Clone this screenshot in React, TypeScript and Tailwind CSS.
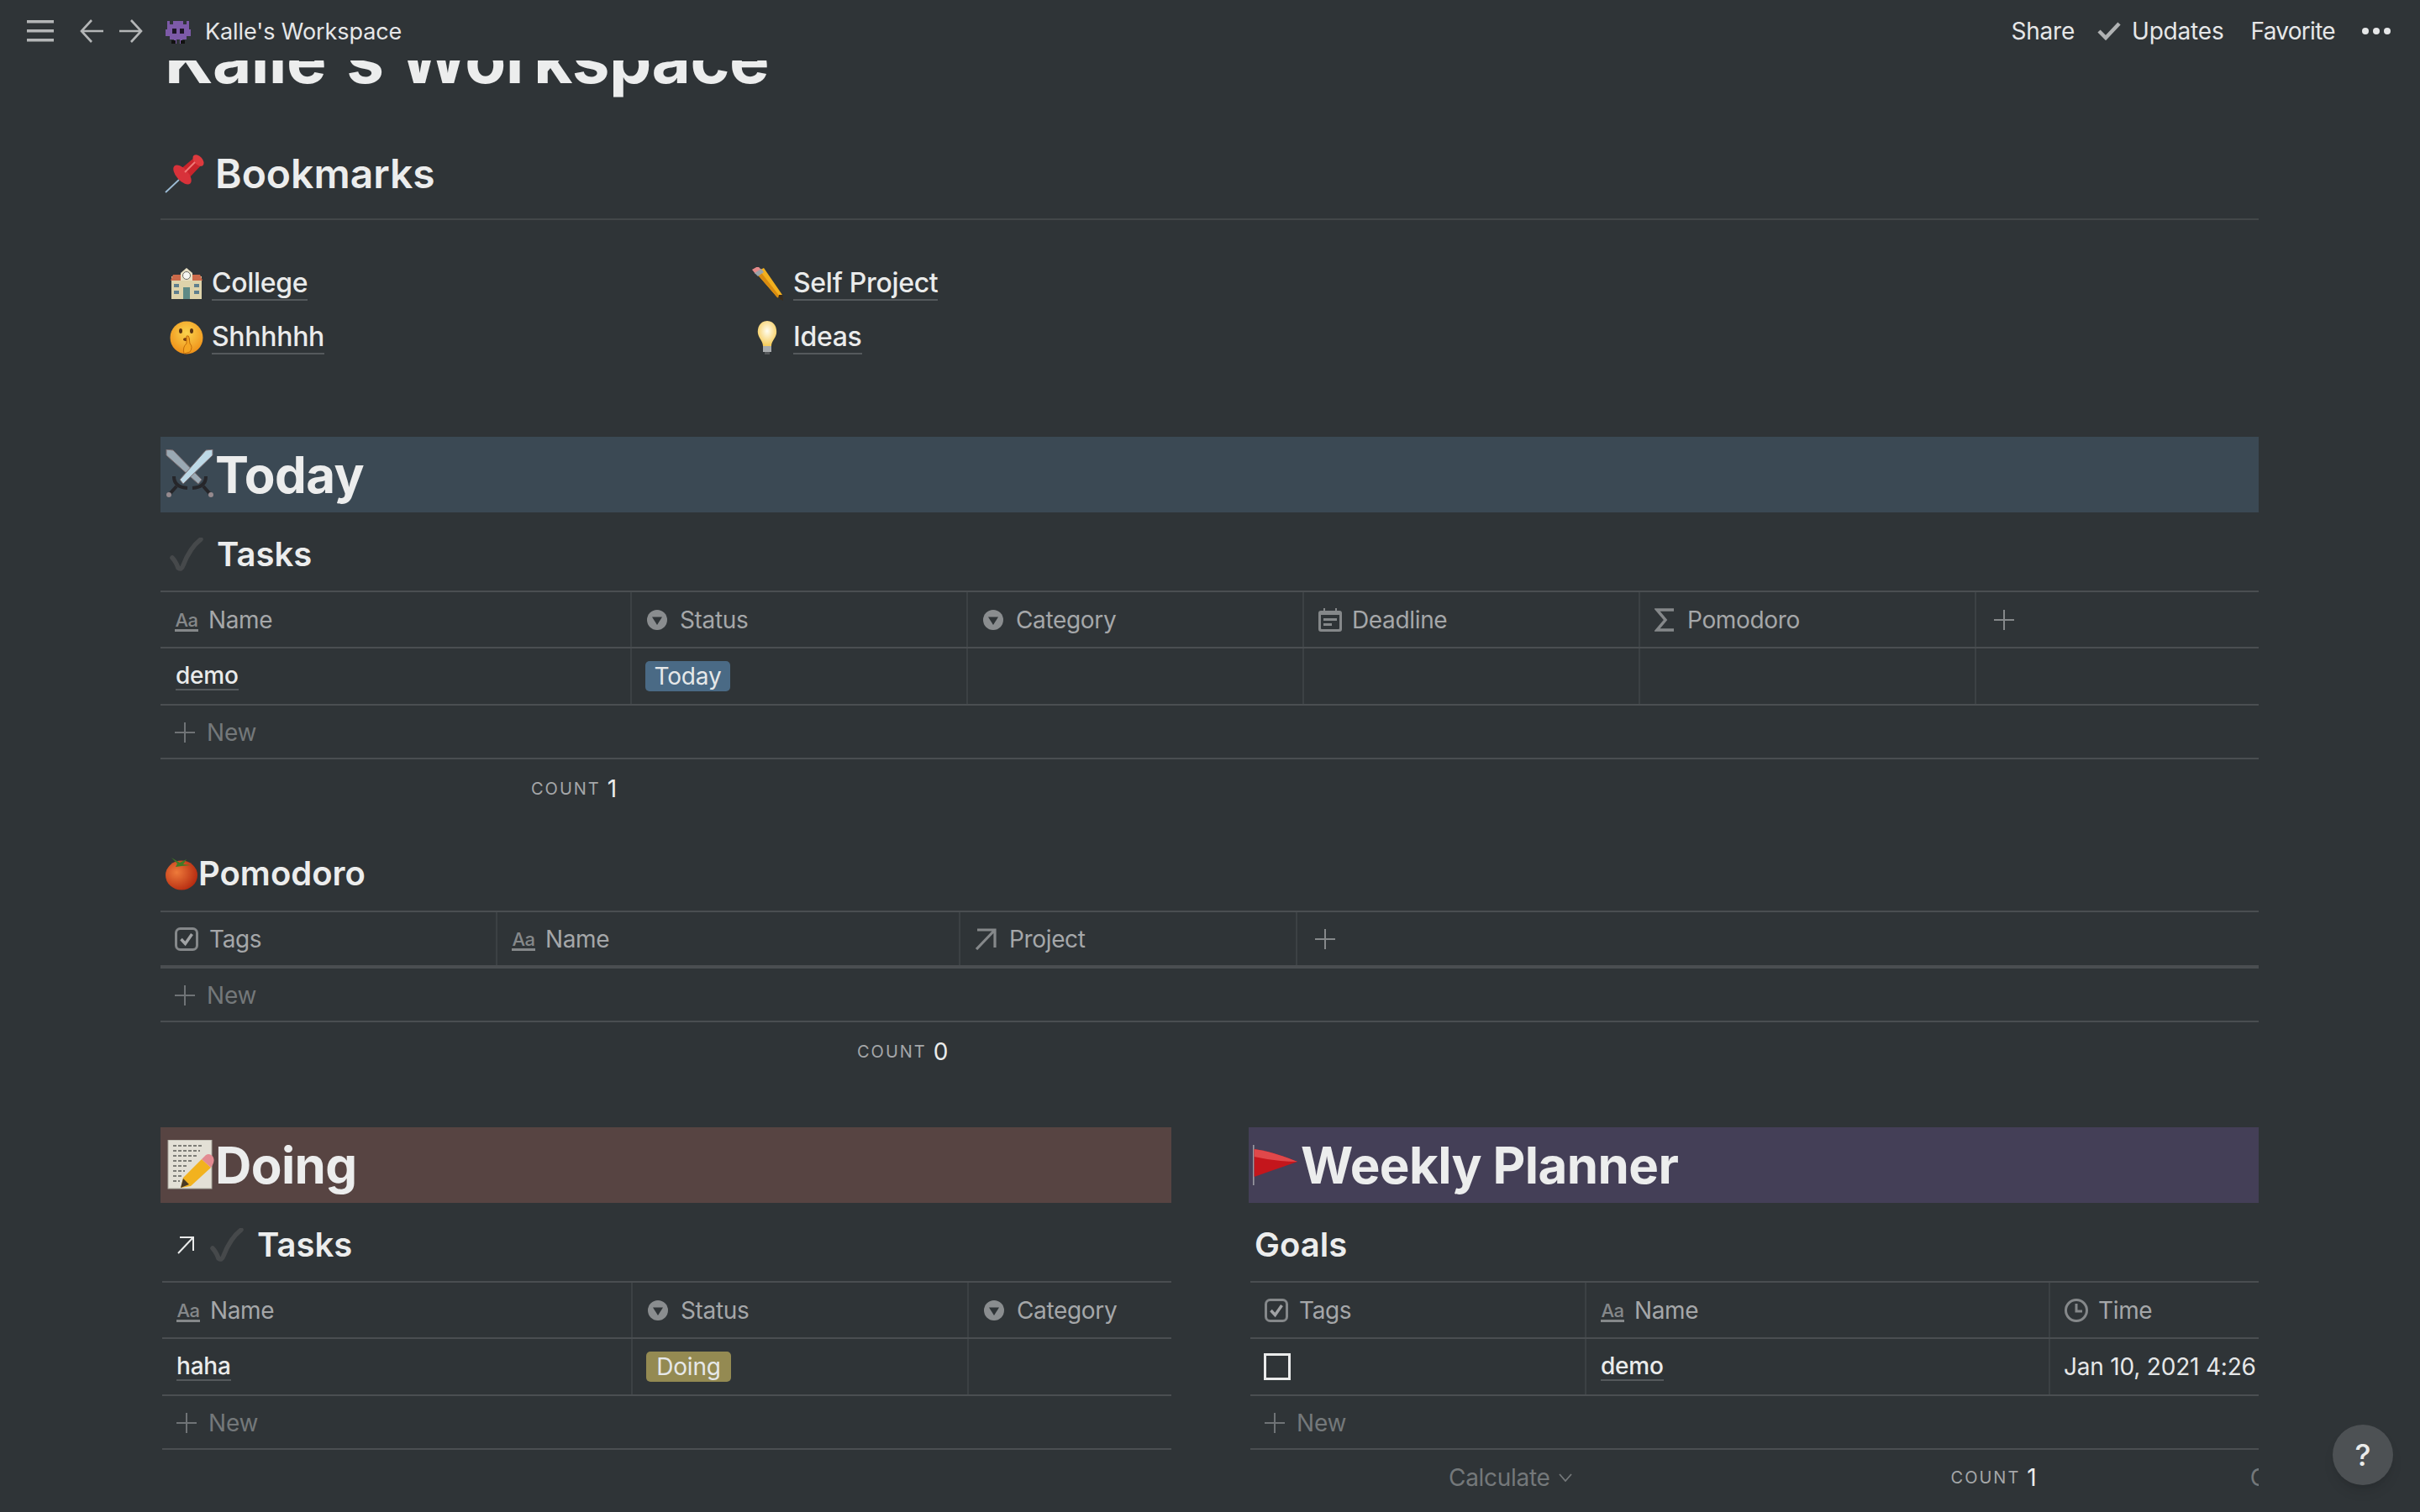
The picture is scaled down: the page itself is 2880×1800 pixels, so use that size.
import React from 'react';

const sans = 'font-["Inter","Noto_Sans",sans-serif]';

// ---- icons ----
const MenuIcon = () => (
  <svg width="32" height="26" viewBox="0 0 32 26" fill="#b4b6b7">
    <rect x="0" y="0" width="32" height="3.5" />
    <rect x="0" y="11" width="32" height="3.5" />
    <rect x="0" y="22" width="32" height="3.5" />
  </svg>
);

const ArrowIcon = ({ flip }: { flip?: boolean }) => (
  <svg width="28" height="28" viewBox="0 0 28 28" fill="none" stroke="#b4b6b7" strokeWidth="2.6" className={flip ? 'rotate-180' : ''}>
    <path d="M14 1 L2 14 L14 27 M2 14 H28" />
  </svg>
);

const CheckSmall = () => (
  <svg width="28" height="22" viewBox="0 0 28 22" fill="none" stroke="#b0b2b3" strokeWidth="4.5">
    <path d="M2 11 L10 19 L26 2" />
  </svg>
);

const Plus = ({ color = '#6f7376', size = 24 }: { color?: string; size?: number }) => (
  <svg width={size} height={size} viewBox="0 0 24 24" fill="none" stroke={color} strokeWidth="2">
    <path d="M12 0 V24 M0 12 H24" />
  </svg>
);

const TextIcon = () => (
  <span className="flex h-[28px] w-[28px] flex-col items-center justify-end">
    <span className="text-[22px] leading-[22px] font-medium tracking-[-0.5px] text-[#85888a]">Aa</span>
    <span className="h-[3px] w-[28px] bg-[#85888a]" />
  </span>
);

const SelectIcon = () => (
  <svg width="24" height="24" viewBox="0 0 24 24" className="mr-[3px] ml-px">
    <circle cx="12" cy="12" r="12" fill="#8a8d8f" />
    <path d="M6 8.5 H18 L12 18 Z" fill="#2f3437" />
  </svg>
);

const DateIcon = () => (
  <svg width="28" height="28" viewBox="0 0 28 28" fill="#85888a">
    <path d="M3 3 H6 V0 H8 V3 H20 V0 H22 V3 H25 A3 3 0 0 1 28 6 V25 A3 3 0 0 1 25 28 H3 A3 3 0 0 1 0 25 V6 A3 3 0 0 1 3 3 Z M3 8 V24 Q3 25 4 25 H24 Q25 25 25 24 V8 Z" />
    <rect x="6" y="12" width="16" height="3" />
    <rect x="6" y="18" width="10" height="3" />
  </svg>
);

const SigmaIcon = () => (
  <svg width="24" height="28" viewBox="0 0 24 28" fill="none" stroke="#85888a" strokeWidth="3.5" className="mr-[3px]">
    <path d="M23 2 H3 L13 14 L3 26 H23" />
  </svg>
);

const CheckboxIcon = () => (
  <svg width="28" height="28" viewBox="0 0 28 28" fill="none" stroke="#85888a" className="mr-px">
    <rect x="1.5" y="1.5" width="25" height="25" rx="5" strokeWidth="3" />
    <path d="M7.5 14 L12.5 19.5 L20.5 8" strokeWidth="3.5" stroke="#a0a2a4" />
  </svg>
);

const RelationIcon = () => (
  <svg width="26" height="26" viewBox="0 0 26 26" fill="none" stroke="#85888a" strokeWidth="3.2" className="mr-[3px]">
    <path d="M3 2 H24 V23 M24 2 L2 25" />
  </svg>
);

const ClockIcon = () => (
  <svg width="28" height="28" viewBox="0 0 28 28" fill="none" stroke="#85888a" strokeWidth="3">
    <circle cx="14" cy="14" r="12.5" />
    <path d="M14 6 V15 H21" />
  </svg>
);

const RelationSmall = () => (
  <svg width="22" height="22" viewBox="0 0 22 22" fill="none" stroke="#eaebeb" strokeWidth="2">
    <path d="M4 2 H20 V18 M20 2 L2 21" />
  </svg>
);

// ---- emoji drawings ----
const Invader = () => (
  <svg width="32" height="32" viewBox="0 0 32 32">
    <path d="M3 4 H6 V8 H10 V4 H22 V8 H26 V4 H29 V14 H31 V22 H26 V26 H21 V31 H18 V26 H14 V31 H11 V26 H6 V22 H1 V14 H3 Z" fill="#7d5aa8" />
    <rect x="9" y="13" width="5" height="6" fill="#1d1526" />
    <rect x="18" y="13" width="5" height="6" fill="#1d1526" />
    <rect x="8" y="27" width="5" height="4" fill="#111" />
    <rect x="19" y="27" width="5" height="4" fill="#111" />
  </svg>
);

const Pin = () => (
  <svg width="48" height="48" viewBox="0 0 48 48">
    <path d="M1 46 L17 31" stroke="#9dbdd6" strokeWidth="1.8" />
    <path d="M17 20 L36 4 L44 13 L27 31 Z" fill="#c9242b" />
    <ellipse cx="21" cy="25" rx="14" ry="7" fill="#d8323a" transform="rotate(48 21 25)" />
    <ellipse cx="40" cy="8" rx="8" ry="5" fill="#de3a3e" transform="rotate(48 40 8)" />
    <path d="M24 22 L36 10" stroke="#ef7a76" strokeWidth="2" />
  </svg>
);

const School = () => (
  <svg width="40" height="40" viewBox="0 0 40 40">
    <rect x="2" y="11" width="36" height="27" fill="#ded3ab" />
    <path d="M1 16 L4 9 H36 L39 16 Z" fill="#cc6a4a" />
    <path d="M13 16 V7 L20 1 L27 7 V16 Z" fill="#e8e0c4" />
    <circle cx="20" cy="10" r="4.5" fill="#f7f7f2" stroke="#6c6c64" strokeWidth="1" />
    <path d="M16 38 V24 H24 V38 Z" fill="#5e8a86" />
    <path d="M5 20 H11 V24 H5 Z M5 28 H11 V32 H5 Z M29 20 H35 V24 H29 Z M29 28 H35 V32 H29 Z" fill="#5f7f8e" />
  </svg>
);

const Pencil = () => (
  <svg width="40" height="40" viewBox="0 0 40 40">
    <path d="M6 6 L16 1 L38 33 L38 39 L32 36 Z" fill="#f2b01e" />
    <path d="M11 4 L35 35 L32 36 L6 6 Z" fill="#d98b10" />
    <path d="M2 3 L9 -1 L13 3 L6 8 Z" fill="#e58a8a" />
    <path d="M5 7 L13 2 L16 6 L9 11 Z" fill="#9aa2a8" />
    <path d="M34 33 L38 33 L39 40 L33 37 Z" fill="#3a2c1c" />
  </svg>
);

const Shush = () => (
  <svg width="40" height="40" viewBox="0 0 40 40">
    <defs>
      <radialGradient id="shush" cx="50%" cy="35%" r="70%">
        <stop offset="0%" stopColor="#fbd34d" />
        <stop offset="100%" stopColor="#ee8b14" />
      </radialGradient>
    </defs>
    <circle cx="20" cy="20" r="19.5" fill="url(#shush)" />
    <ellipse cx="13" cy="12" rx="2" ry="3" fill="#5c3410" />
    <ellipse cx="26" cy="12" rx="2" ry="3" fill="#5c3410" />
    <ellipse cx="20" cy="22" rx="4" ry="2" fill="#7a3e10" />
    <path d="M17 39 Q15 31 20 27 L20 18 Q23 17 23 20 L24 27 Q28 31 24 37 Z" fill="#f5a623" stroke="#c16d0c" strokeWidth="1" />
  </svg>
);

const Bulb = () => (
  <svg width="26" height="40" viewBox="0 0 26 40">
    <defs>
      <radialGradient id="bulb" cx="50%" cy="40%" r="60%">
        <stop offset="0%" stopColor="#fffdf0" />
        <stop offset="100%" stopColor="#f6cb58" />
      </radialGradient>
    </defs>
    <path d="M13 0 C22 0 25 9 24 15 C23 21 18 24 18 30 H8 C8 24 3 21 2 15 C1 9 4 0 13 0 Z" fill="url(#bulb)" />
    <rect x="8" y="30" width="10" height="7" fill="#a8abad" />
    <rect x="10" y="37" width="6" height="3" fill="#55585a" />
  </svg>
);

const Swords = () => (
  <svg width="60" height="60" viewBox="0 0 60 60">
    <path d="M2 0 L10 1 L44 36 L40 41 L2 7 Z" fill="#9aa9b4" stroke="#7b6d70" strokeWidth="1" />
    <path d="M57 0 L49 1 L18 36 L22 41 L57 7 Z" fill="#bcd8e6" stroke="#7b6d70" strokeWidth="1" />
    <path d="M11 32 Q11 45 27 46 M14 44 L6 53" fill="none" stroke="#26262a" strokeWidth="4" />
    <path d="M49 32 Q49 45 33 46 M46 44 L54 53" fill="none" stroke="#26262a" strokeWidth="4" />
    <circle cx="5" cy="54" r="3" fill="#958a8e" />
    <circle cx="55" cy="54" r="3" fill="#958a8e" />
  </svg>
);

const DarkCheck = () => (
  <svg width="40" height="40" viewBox="0 0 40 40" fill="none">
    <path d="M3 24 Q7 28 10 36 Q14 39 16 33 Q24 12 37 2" stroke="#46494b" strokeWidth="5.5" strokeLinecap="round" />
  </svg>
);

const Tomato = () => (
  <svg width="40" height="40" viewBox="0 0 40 40" className="-ml-px">
    <defs>
      <radialGradient id="tomato" cx="35%" cy="40%" r="70%">
        <stop offset="0%" stopColor="#ee7a3a" />
        <stop offset="100%" stopColor="#b3280f" />
      </radialGradient>
    </defs>
    <ellipse cx="20" cy="22" rx="19" ry="17.5" fill="url(#tomato)" />
    <path d="M8 1 L18 7 L26 3 L22 9 L31 10 L20 11 L13 12 L15 8 Z" fill="#3f7a26" />
  </svg>
);

const Memo = () => (
  <svg width="60" height="60" viewBox="0 0 60 60">
    <rect x="4" y="0" width="52" height="58" fill="#e3e0d6" stroke="#a8a69c" strokeWidth="1" />
    <path d="M10 7 H46 M10 13 H42 M10 19 H40 M10 25 H34 M10 31 H28 M10 37 H24 M10 43 H22 M10 49 H18" stroke="#5c5c58" strokeWidth="1.6" strokeDasharray="4 2" />
    <path d="M44 23 L55 33 L31 55 L19 57 L22 45 Z" fill="#f2b21e" />
    <path d="M44 23 L49 18 Q54 15 58 21 Q60 26 55 33 Z" fill="#e38b92" />
    <path d="M19 57 L22 46 L29 53 Z" fill="#4a3a24" />
  </svg>
);

const Flag = () => (
  <svg width="56" height="48" viewBox="0 0 56 48">
    <rect x="0" y="0" width="1.6" height="48" fill="#9a9aa2" />
    <path d="M1.6 5 Q24 8 53 20 Q30 28 1.6 38 Z" fill="#c4161c" />
    <path d="M1.6 5 Q24 8 53 20 Q28 20 1.6 14 Z" fill="#e0484a" />
  </svg>
);

// ---- table bits ----
const ColHead = ({ w, icon, label }: { w: string; icon: React.ReactNode; label: string }) => (
  <div className={`flex shrink-0 items-center gap-[12px] border-r-2 border-[#3c4144] pl-[17px] ${w}`}>
    {icon}
    <span className="text-[28px] leading-none tracking-[-0.35px] text-[#a5a7a9]">{label}</span>
  </div>
);

const NewRow = () => (
  <div className="flex h-[64px] items-center gap-[14px] border-b-2 border-[#4a4e51] pt-[2px] pl-[17px]">
    <Plus />
    <span className="text-[28px] leading-none tracking-[-0.2px] text-[#74787a]">New</span>
  </div>
);

const Count = ({ n, className }: { n: string; className: string }) => (
  <div className={`flex shrink-0 items-center ${className}`}>
    <span className="text-[20px] tracking-[2px] text-[#a5a7a9]">COUNT</span>
    <span className="ml-[8px] text-[28px] leading-none text-[#eaebeb]">{n}</span>
  </div>
);

const LinkText = ({ children, className = '' }: { children: React.ReactNode; className?: string }) => (
  <span className={`border-b-2 border-[#55595c] ${className}`}>{children}</span>
);

const Tag = ({ label, color }: { label: string; color: string }) => (
  <span className={`ml-[16px] flex h-[36px] w-[101px] items-center justify-center rounded-[5px] text-[28px] leading-none tracking-[-0.2px] text-[#e6e8e9] ${color}`}>
    {label}
  </span>
);

const Banner = ({ emoji, title, color }: { emoji: React.ReactNode; title: string; color: string }) => (
  <div className={`flex h-[90px] items-center pl-[5px] ${color}`}>
    {emoji}
    <span className="text-[60px] leading-none font-bold tracking-[-0.6px] text-[#eceded]">{title}</span>
  </div>
);

const Bookmark = ({ emoji, label, slot }: { emoji: React.ReactNode; label: string; slot: string }) => (
  <div className="flex h-[64px] items-center">
    <span className={`flex shrink-0 justify-center ${slot}`}>{emoji}</span>
    <LinkText className="text-[32px] leading-[38px] font-medium tracking-[-0.3px] text-[#eaebeb]">{label}</LinkText>
  </div>
);

const H3 = ({ children }: { children: React.ReactNode }) => (
  <h3 className="flex h-[60px] items-center text-[40px] leading-none font-semibold text-[#eceded]">{children}</h3>
);

const cell = 'border-r-2 border-[#3c4144]';

export default function App() {
  return (
    <div className={`relative flex h-[1800px] w-full flex-col overflow-hidden bg-[#2f3437] text-[#eaebeb] ${sans}`}>
      {/* top bar */}
      <header className="relative z-10 flex h-[72px] shrink-0 items-center bg-[#2f3437] pt-[2px] pr-[34px] pl-[32px]">
        <MenuIcon />
        <span className="ml-[31px]"><ArrowIcon /></span>
        <span className="ml-[19px]"><ArrowIcon flip /></span>
        <span className="ml-[26px]"><Invader /></span>
        <span className="ml-[16px] text-[27px] leading-none tracking-[-0.1px] text-[#e6e7e8]">Kalle's Workspace</span>
        <div className="ml-auto flex items-center text-[28px] leading-none tracking-[-0.2px] text-[#e6e7e8]">
          <span>Share</span>
          <span className="ml-[27px]"><CheckSmall /></span>
          <span className="ml-[13px]">Updates</span>
          <span className="ml-[32px] tracking-[-0.7px]">Favorite</span>
          <div className="mr-px ml-[32px] flex gap-[5px]">
            <span className="h-[8px] w-[8px] rounded-full bg-[#e6e7e8]" />
            <span className="h-[8px] w-[8px] rounded-full bg-[#e6e7e8]" />
            <span className="h-[8px] w-[8px] rounded-full bg-[#e6e7e8]" />
          </div>
        </div>
      </header>

      {/* page, scrolled so the title sits under the bar */}
      <main className="flex-1 overflow-hidden pr-[192px] pl-[191px]">
        <h1 className="-mt-[50px] pl-[5px] text-[80px] leading-[96px] font-bold tracking-[-0.6px] text-[#eceded]">Kalle's Workspace</h1>

        <div className="mt-[59px] flex h-[60px] items-center pl-[5px]">
          <Pin />
          <h2 className="ml-[12px] text-[48px] leading-none font-semibold text-[#eceded]">Bookmarks</h2>
        </div>
        <div className="mt-[23px] h-[2px] bg-[#434749]" />

        <div className="mt-[44px] flex">
          <div className="w-[693px] pl-[5px]">
            <Bookmark slot="w-[56px] pr-[5px]" emoji={<School />} label="College" />
            <Bookmark slot="w-[56px] pr-[5px]" emoji={<Shush />} label="Shhhhhh" />
          </div>
          <div>
            <Bookmark slot="w-[60px] pr-[2px]" emoji={<Pencil />} label="Self Project" />
            <Bookmark slot="w-[60px] pr-[2px]" emoji={<Bulb />} label="Ideas" />
          </div>
        </div>

        <div className="mt-[86px]">
          <Banner emoji={<Swords />} title="Today" color="bg-[#3b4954]" />
        </div>

        <div className="mt-[20px] pl-[11px]">
          <H3><DarkCheck /><span className="ml-[16px]">Tasks</span></H3>
        </div>

        <div className="mt-[13px] border-t-2 border-[#4a4e51]">
          <div className="flex h-[65px]">
            <ColHead w="w-[561px]" icon={<TextIcon />} label="Name" />
            <ColHead w="w-[400px]" icon={<SelectIcon />} label="Status" />
            <ColHead w="w-[400px]" icon={<SelectIcon />} label="Category" />
            <ColHead w="w-[400px]" icon={<DateIcon />} label="Deadline" />
            <ColHead w="w-[400px]" icon={<SigmaIcon />} label="Pomodoro" />
            <div className="flex flex-1 items-center pl-[21px]"><Plus color="#85888a" /></div>
          </div>
          <div className="flex h-[70px] border-y-2 border-[#4a4e51]">
            <div className={`flex w-[561px] items-center pl-[18px] ${cell}`}>
              <LinkText className="text-[28px] leading-[32px] font-medium tracking-[-0.2px]">demo</LinkText>
            </div>
            <div className={`flex w-[400px] items-center ${cell}`}>
              <Tag label="Today" color="bg-[#4a6a85]" />
            </div>
            <div className={`w-[400px] ${cell}`} />
            <div className={`w-[400px] ${cell}`} />
            <div className={`w-[400px] ${cell}`} />
          </div>
          <NewRow />
          <Count n="1" className="h-[70px] pl-[441px]" />
        </div>

        <div className="mt-[36px] pl-[6px]">
          <H3><Tomato /><span>Pomodoro</span></H3>
        </div>

        <div className="mt-[14px] border-t-2 border-[#4a4e51]">
          <div className="flex h-[67px] border-b-[4px] border-[#4a4e51]">
            <ColHead w="w-[401px]" icon={<CheckboxIcon />} label="Tags" />
            <ColHead w="w-[551px]" icon={<TextIcon />} label="Name" />
            <ColHead w="w-[401px]" icon={<RelationIcon />} label="Project" />
            <div className="flex flex-1 items-center pl-[21px]"><Plus color="#85888a" /></div>
          </div>
          <NewRow />
          <Count n="0" className="h-[70px] pl-[829px]" />
        </div>

        <div className="mt-[55px] grid grid-cols-[1203px_1202px] gap-[92px]">
          <section>
            <Banner emoji={<Memo />} title="Doing" color="bg-[#574442]" />
            <div className="mt-[20px] flex items-center pl-[19px]">
              <RelationSmall />
              <span className="ml-[18px]"><DarkCheck /></span>
              <span className="ml-[16px]"><H3>Tasks</H3></span>
            </div>
            <div className="mt-[13px] ml-[2px] border-t-2 border-[#4a4e51]">
              <div className="flex h-[65px]">
                <ColHead w="w-[560px]" icon={<TextIcon />} label="Name" />
                <ColHead w="w-[400px]" icon={<SelectIcon />} label="Status" />
                <div className="flex flex-1 items-center gap-[12px] pl-[17px]">
                  <SelectIcon />
                  <span className="text-[28px] leading-none tracking-[-0.35px] text-[#a5a7a9]">Category</span>
                </div>
              </div>
              <div className="flex h-[70px] border-y-2 border-[#4a4e51]">
                <div className={`flex w-[560px] items-center pl-[17px] ${cell}`}>
                  <LinkText className="text-[28px] leading-[32px] font-medium tracking-[-0.2px]">haha</LinkText>
                </div>
                <div className={`flex w-[400px] items-center ${cell}`}>
                  <Tag label="Doing" color="bg-[#948a52]" />
                </div>
              </div>
              <NewRow />
            </div>
          </section>

          <section>
            <Banner emoji={<span className="mr-px"><Flag /></span>} title="Weekly Planner" color="bg-[#443f57]" />
            <div className="mt-[20px] pl-[7px]">
              <H3>Goals</H3>
            </div>
            <div className="mt-[13px] ml-[2px] overflow-hidden border-t-2 border-[#4a4e51]">
              <div className="flex h-[65px]">
                <ColHead w="w-[400px]" icon={<CheckboxIcon />} label="Tags" />
                <ColHead w="w-[552px]" icon={<TextIcon />} label="Name" />
                <div className="flex flex-1 items-center gap-[12px] pl-[17px]">
                  <ClockIcon />
                  <span className="text-[28px] leading-none tracking-[-0.35px] text-[#a5a7a9]">Time</span>
                </div>
              </div>
              <div className="flex h-[70px] border-y-2 border-[#4a4e51]">
                <div className={`flex w-[400px] items-center pl-[16px] ${cell}`}>
                  <span className="h-[32px] w-[32px] border-[3px] border-[#eaebeb]" />
                </div>
                <div className={`flex w-[552px] items-center pl-[17px] ${cell}`}>
                  <LinkText className="text-[28px] leading-[32px] font-medium tracking-[-0.2px]">demo</LinkText>
                </div>
                <div className="flex flex-1 items-center pl-[16px]">
                  <span className="text-[28px] leading-none tracking-[-0.2px] whitespace-nowrap text-[#e6e7e8]">Jan 10, 2021 4:26</span>
                </div>
              </div>
              <NewRow />
              <div className="flex h-[66px] items-center">
                <span className="ml-[236px] shrink-0 text-[28px] leading-none tracking-[-0.3px] text-[#74787a]">Calculate</span>
                <svg width="16" height="10" viewBox="0 0 16 10" fill="none" stroke="#74787a" strokeWidth="1.8" className="ml-[10px] shrink-0">
                  <path d="M1 1 L8 9 L15 1" />
                </svg>
                <Count n="1" className="ml-[451px]" />
                <span className="ml-[254px] shrink-0 text-[28px] leading-none text-[#74787a]">Calculate</span>
              </div>
            </div>
          </section>
        </div>
      </main>

      {/* help bubble */}
      <div className="absolute right-[32px] bottom-[32px] flex h-[72px] w-[72px] items-center justify-center rounded-full bg-[#4d5154] text-[36px] font-medium text-[#eaebeb] shadow-lg">
        ?
      </div>
    </div>
  );
}
